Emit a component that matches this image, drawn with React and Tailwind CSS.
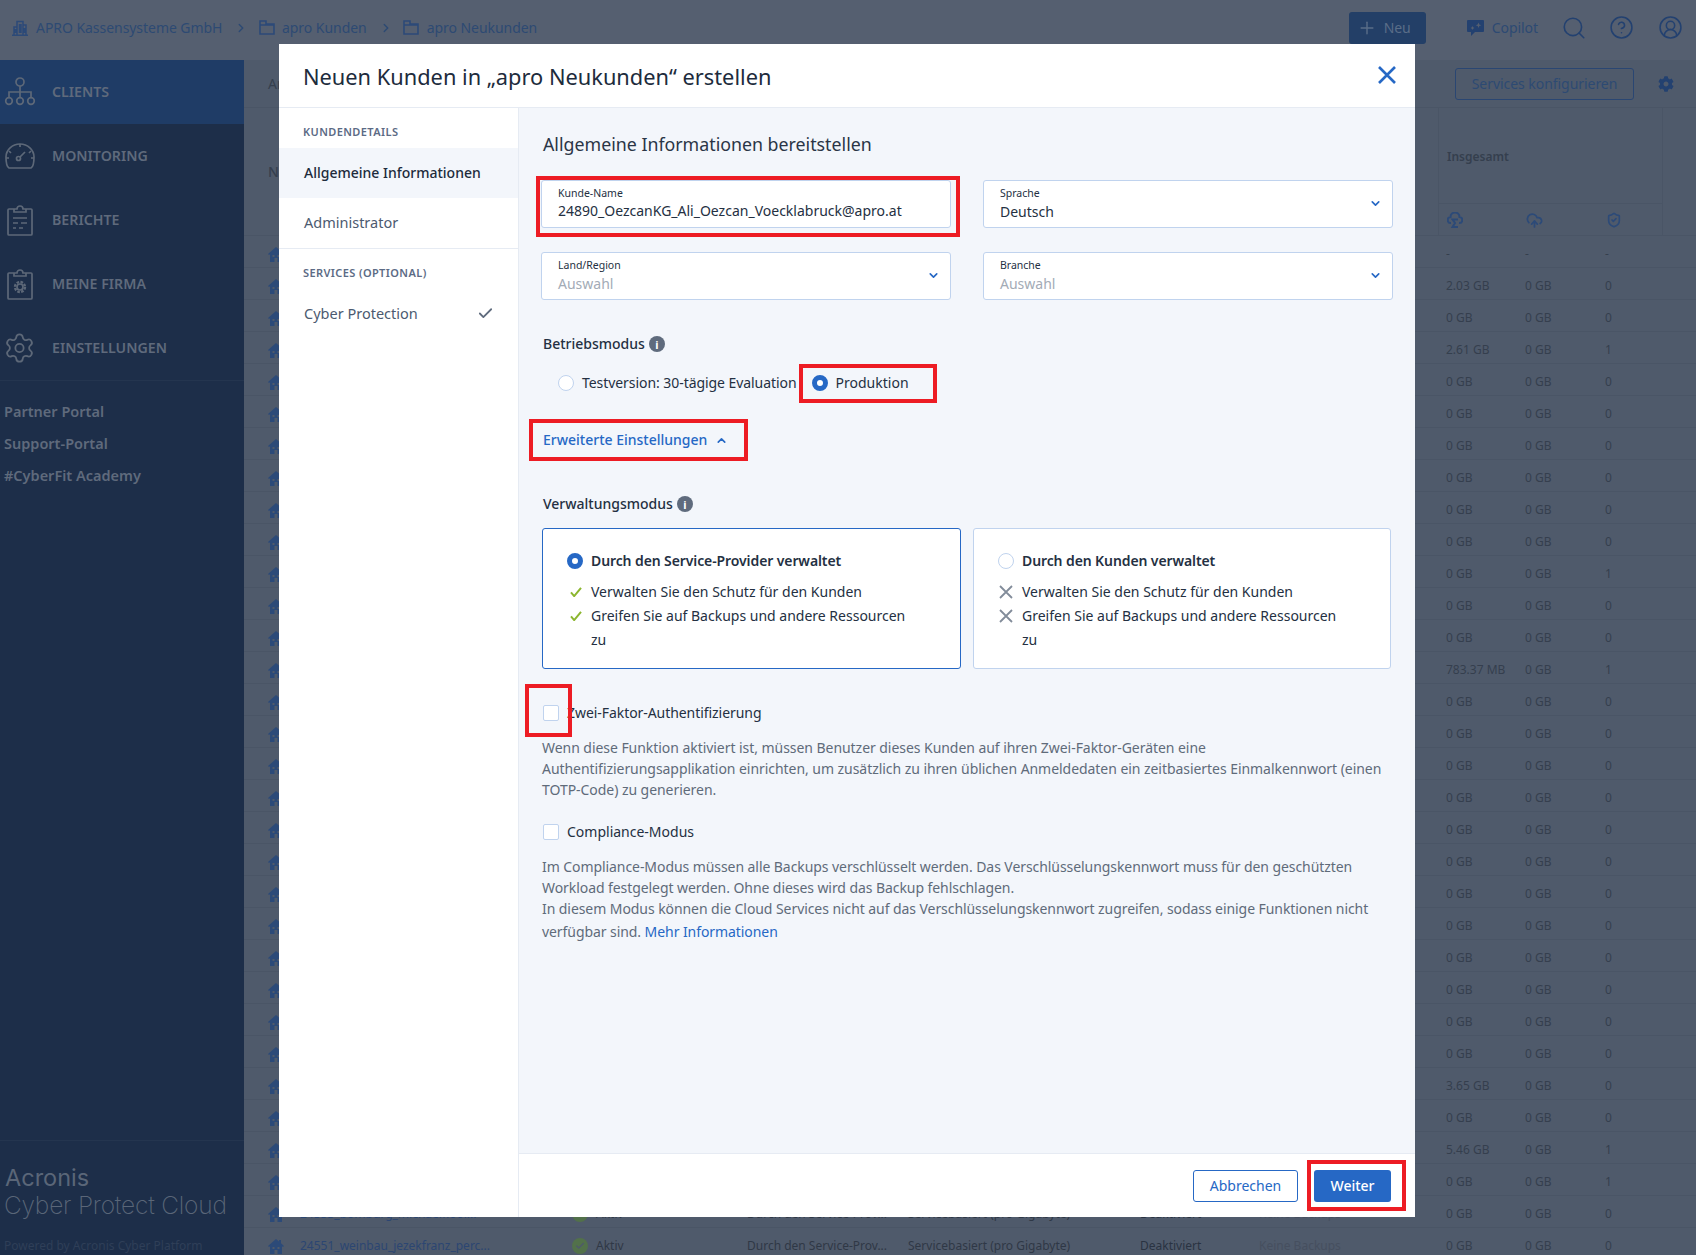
import React from 'react';
import { ChevronDown, ChevronRight, ChevronUp, Plus, Search, CircleHelp, CircleUserRound, Check, Settings, ShieldCheck, CloudUpload } from "lucide-react";
import { FaCog } from "react-icons/fa";

const usage = [
  ['-', '-', '-'], ['2.03 GB', '0 GB', '0'], ['0 GB', '0 GB', '0'], ['2.61 GB', '0 GB', '1'], ['0 GB', '0 GB', '0'],
  ['0 GB', '0 GB', '0'], ['0 GB', '0 GB', '0'], ['0 GB', '0 GB', '0'], ['0 GB', '0 GB', '0'], ['0 GB', '0 GB', '0'],
  ['0 GB', '0 GB', '1'], ['0 GB', '0 GB', '0'], ['0 GB', '0 GB', '0'], ['783.37 MB', '0 GB', '1'], ['0 GB', '0 GB', '0'],
  ['0 GB', '0 GB', '0'], ['0 GB', '0 GB', '0'], ['0 GB', '0 GB', '0'], ['0 GB', '0 GB', '0'], ['0 GB', '0 GB', '0'],
  ['0 GB', '0 GB', '0'], ['0 GB', '0 GB', '0'], ['0 GB', '0 GB', '0'], ['0 GB', '0 GB', '0'], ['0 GB', '0 GB', '0'],
  ['0 GB', '0 GB', '0'], ['3.65 GB', '0 GB', '0'], ['0 GB', '0 GB', '0'], ['5.46 GB', '0 GB', '1'], ['0 GB', '0 GB', '1'],
  ['0 GB', '0 GB', '0'], ['0 GB', '0 GB', '0'],
];

function ClientsIcon() {
  return (
    <svg width="32" height="30" viewBox="0 0 32 30" fill="none" stroke="#5d6878" strokeWidth="1.7">
      <circle cx="16" cy="5" r="4" />
      <path d="M16 9v11M5 20v-5h22v5" />
      <circle cx="5" cy="24" r="3.3" />
      <circle cx="16" cy="24" r="3.3" />
      <circle cx="27" cy="24" r="3.3" />
    </svg>
  );
}

function MonitoringIcon() {
  return (
    <svg width="32" height="30" viewBox="0 0 32 30" fill="none" stroke="#5d6878" strokeWidth="1.7">
      <path d="M5 27c-2-1-3-4-3-11a14 13 0 0 1 28 0c0 7-1 10-3 11z" strokeLinejoin="round" />
      <path d="M16 3v3M5 10l2 2M27 10l-2 2M2 17h3M30 17h-3" />
      <circle cx="14.5" cy="17.5" r="2" />
      <path d="M16 16l5-5" />
    </svg>
  );
}

function ReportIcon() {
  return (
    <svg width="32" height="32" viewBox="0 0 32 32" fill="none" stroke="#5d6878" strokeWidth="1.7">
      <path d="M10 5H5a1 1 0 0 0-1 1v24a1 1 0 0 0 1 1h22a1 1 0 0 0 1-1V6a1 1 0 0 0-1-1h-5M10 8V5h3a3 3 0 0 1 6 0h3v3z" />
      <path d="M9 14h14M9 19h5M17 19h6M9 24h3M15 24h4" />
    </svg>
  );
}

function CompanyIcon() {
  return (
    <svg width="32" height="32" viewBox="0 0 32 32" fill="none" stroke="#5d6878" strokeWidth="1.7">
      <path d="M10 5H5a1 1 0 0 0-1 1v24a1 1 0 0 0 1 1h22a1 1 0 0 0 1-1V6a1 1 0 0 0-1-1h-5M10 8V5h3a3 3 0 0 1 6 0h3v3z" />
      <circle cx="16" cy="19" r="3" />
      <circle cx="16" cy="19" r="5" strokeWidth="2.4" strokeDasharray="2.6 1.3" />
    </svg>
  );
}

function HomeIcon() {
  return (
    <svg width="16" height="15" viewBox="0 0 16 15" fill="#2c4a78" className="shrink-0">
      <path d="M8 0l3 2.6V1h2v3.3L16 7l-1 1-1-.8V15H9.500v-4h-3v4H2V7.200L1 8 0 7z" />
      <path d="M4.500 8h2v2h-2zM9.500 8h2v2h-2z" fill="#4f5a6b" />
    </svg>
  );
}

function FolderIcon() {
  return (
    <svg width="16" height="15" viewBox="0 0 16 15" fill="none" stroke="#2c4a78" strokeWidth="1.6" className="shrink-0">
      <path d="M1 14V1h6v3h8v10zM1 5h14" />
    </svg>
  );
}

function TickMark() {
  return (
    <svg width="12" height="10" viewBox="0 0 13 11" fill="none" stroke="#8cb62f" strokeWidth="2.2" className="ml-[3px]">
      <path d="M1 6l3.500 4L12 1" />
    </svg>
  );
}

function CrossMark() {
  return (
    <svg width="14" height="14" viewBox="0 0 14 14" fill="none" stroke="#828c9a" strokeWidth="1.8" className="ml-px">
      <path d="M1 1l12 12M13 1L1 13" />
    </svg>
  );
}

function RedBox({ className }) {
  return <div className={`absolute border-4 border-[#ed1c24] pointer-events-none ${className}`} />;
}

function Radio({ on }) {
  return on
    ? <span className="block w-4 h-4 shrink-0 rounded-full border-[5px] border-[#2668c5] bg-white" />
    : <span className="block w-4 h-4 shrink-0 rounded-full border border-[#c0d3ee] bg-white" />;
}

function InfoDot() {
  return <span className="flex items-center justify-center w-4 h-4 rounded-full bg-[#5f6b7d] text-white text-[11px] font-bold leading-none">i</span>;
}

function Field({ label, value, placeholder, select }) {
  return (
    <div className="relative h-12 bg-white border border-[#c0d3ee] rounded-[3px] pl-4 pt-[5px]">
      <div className="text-[10.5px] leading-[14px] text-[#243042]">{label}</div>
      <div className={`text-sm leading-5 ${select ? 'mt-[2px]' : 'mt-[1px]'} ${placeholder ? 'text-[#a3abb6]' : 'text-[#243042]'}`}>{value}</div>
      {select && <ChevronDown size={13} strokeWidth={3} className="absolute right-[10px] top-[16px] text-[#2668c5]" />}
    </div>
  );
}

function ModeCard({ active, title, icon: Icon }) {
  return (
    <div className={`h-[141px] bg-white rounded-[3px] border pl-6 pt-5 ${active ? 'w-[419px] border-[#2668c5]' : 'w-[418px] border-[#c0d3ee]'}`}>
      <div className="flex items-center gap-2 h-6 text-sm font-semibold tracking-[-0.1px] text-[#243042]">
        <Radio on={active} />
        {title}
      </div>
      <div className="mt-[7px] text-sm leading-6 text-[#243042]">
        <div className="flex">
          <span className="w-6 h-6 shrink-0 flex items-center"><Icon /></span>
          Verwalten Sie den Schutz für den Kunden
        </div>
        <div className="flex">
          <span className="w-6 h-6 shrink-0 flex items-center"><Icon /></span>
          <span className="w-[320px]">Greifen Sie auf Backups und andere Ressourcen zu</span>
        </div>
      </div>
    </div>
  );
}

function Sidebar() {
  const items = [
    { label: 'CLIENTS', icon: ClientsIcon, active: true },
    { label: 'MONITORING', icon: MonitoringIcon },
    { label: 'BERICHTE', icon: ReportIcon },
    { label: 'MEINE FIRMA', icon: CompanyIcon },
    { label: 'EINSTELLUNGEN', icon: () => <Settings size={34} strokeWidth={1.3} className="text-[#5d6878] -ml-[1px]" /> },
  ];
  return (
    <aside className="w-[244px] shrink-0 bg-[#1d2e49] flex flex-col">
      {items.map((item) => (
        <div key={item.label} className={`h-16 flex items-center pl-1 gap-4 ${item.active ? 'bg-[#1f3c66]' : ''}`}>
          <span className="w-8 flex justify-center"><item.icon /></span>
          <span className="text-[14.2px] font-semibold text-[#5f6a7c]">{item.label}</span>
        </div>
      ))}
      <div className="border-t border-[#24354f] pt-[14px] pl-1 text-[14.5px] font-semibold text-[#5f6a7c]">
        <div className="h-8 leading-8">Partner Portal</div>
        <div className="h-8 leading-8">Support-Portal</div>
        <div className="h-8 leading-8">#CyberFit Academy</div>
      </div>
      <div className="mt-auto border-t border-[#24354f] h-[115px] pl-[4px] pt-[22px] text-[#5a6678]">
        <div className="font-['Inter'] text-[23.5px] leading-[30px] font-normal pl-px">Acronis</div>
        <div className="font-['Inter'] text-[24.5px] leading-[24px] font-extralight tracking-[-0.2px] whitespace-nowrap">Cyber Protect Cloud</div>
        <div className="mt-[19px] text-xs leading-5 text-[#2f3f58]">Powered by Acronis Cyber Platform</div>
      </div>
    </aside>
  );
}

function TopBar() {
  return (
    <header className="h-[60px] shrink-0 bg-[#555f70] flex items-center pb-[5px] text-sm tracking-[-0.05px] text-[#2d4a73]">
      <svg width="16" height="16" viewBox="0 0 16 16" fill="none" stroke="#2c4a78" strokeWidth="1.5" className="ml-3 shrink-0">
        <path d="M0 15.200h16M2 15V7h3M5 15V1.500h6V15M14 15V5h-3M7.500 4v9M9 4v9M3.500 9v4M12.500 8v5" />
      </svg>
      <span className="ml-2 w-[186px] whitespace-nowrap">APRO Kassensysteme GmbH</span>
      <ChevronRight size={14} strokeWidth={2.5} className="ml-[12px]" />
      <span className="ml-[11px]"><FolderIcon /></span>
      <span className="ml-[7px]">apro Kunden</span>
      <ChevronRight size={14} strokeWidth={2.5} className="ml-[12px]" />
      <span className="ml-[10px]"><FolderIcon /></span>
      <span className="ml-2">apro Neukunden</span>
      <div className="ml-auto flex items-center">
        <div className="w-[77px] h-8 rounded-[3px] bg-[#233f67] flex items-center pl-[8px] gap-[7px] text-[#5a6d88]">
          <Plus size={20} strokeWidth={1.7} />
          Neu
        </div>
        <svg width="17" height="16" viewBox="0 0 17 16" fill="#234170" className="ml-[41px]">
          <path d="M1 0h15a1 1 0 0 1 1 1v10a1 1 0 0 1-1 1H8l-4 4v-4H1a1 1 0 0 1-1-1V1a1 1 0 0 1 1-1z" />
          <path d="M11.500 2.500l.8 2 2 .8-2 .8-.8 2-.8-2-2-.8 2-.8zM5.500 6l.6 1.300 1.400.7-1.400.7-.6 1.300-.6-1.300L3.500 8l1.400-.7z" fill="#555f70" />
        </svg>
        <span className="ml-2">Copilot</span>
        <Search size={26} strokeWidth={1.5} className="ml-[23px] text-[#234170]" />
        <CircleHelp size={25} strokeWidth={1.5} className="ml-[22px] text-[#234170]" />
        <CircleUserRound size={25} strokeWidth={1.5} className="ml-6 mr-[13px] text-[#234170]" />
      </div>
    </header>
  );
}

function CustomerTable() {
  return (
    <main className="flex-1 min-w-0 bg-[#4f5a6b] flex flex-col text-[#353f4e] text-xs">
      <div className="h-12 shrink-0 border-b border-[#4a5566] flex items-center pl-6">
        <span className="text-sm">Ar</span>
        <div className="ml-auto w-[179px] h-8 border border-[#2a4672] rounded-[3px] flex items-center justify-center text-sm tracking-[-0.05px] text-[#2d4a73]">Services konfigurieren</div>
        <FaCog size={16} className="ml-6 mr-[22px] text-[#234170]" />
      </div>
      <div className="h-[128px] shrink-0 flex border-b border-[#4a5566]">
        <div className="w-[1194px] pl-6 pt-[54px] text-sm font-medium">Name</div>
        <div className="w-[225px] border-x border-[#4a5566]">
          <div className="h-24 border-b border-[#4a5566] flex items-center pl-2 pt-[3px] text-xs font-semibold">Insgesamt</div>
          <div className="h-8 grid grid-cols-[79px_80px_1fr] items-center pl-2 text-[#2c4a78]">
            <svg width="16" height="16" viewBox="0 0 16 16" fill="none" stroke="currentColor" strokeWidth="2">
              <path d="M4 11a3 3 0 0 1-.5-6 4.500 4.500 0 0 1 9 0 3 3 0 0 1-.5 6M11 7.500H5.500L8 11l-2.500 4H11" />
            </svg>
            <CloudUpload size={17} strokeWidth={2.5} />
            <ShieldCheck size={16} strokeWidth={2.5} />
          </div>
        </div>
      </div>
      {usage.map((row, i) => (
        <div key={i} className="h-8 shrink-0 grid grid-cols-[320px_175px_159px_233px_120px_187px_79px_80px_66px] items-center pt-[5px] border-b border-[#4a5566] whitespace-nowrap">
          <div className="pl-6 flex items-center gap-[16px] text-[#2c4672]">
            <HomeIcon />
            {i === 31 ? '24551_weinbau_jezekfranz_perc...' : '24553_bomburg_michaelfloor...'}
          </div>
          <div className="pl-2 flex items-center gap-2 text-[#2f3846]">
            <span className="w-4 h-4 rounded-full bg-[#52714a] flex items-center justify-center"><Check size={10} strokeWidth={3.5} className="text-[#4f5a6b]" /></span>
            Aktiv
          </div>
          <div className="pl-2 text-[#2f3846]">Durch den Service-Prov...</div>
          <div className="pl-[10px] text-[#2f3846]">Servicebasiert (pro Gigabyte)</div>
          <div className="pl-[9px] text-[#2a3342]">Deaktiviert</div>
          <div className="pl-2 text-[#464f5f]">Keine Backups</div>
          <div className="pl-2">{row[0]}</div>
          <div className="pl-2">{row[1]}</div>
          <div className="pl-2">{row[2]}</div>
        </div>
      ))}
    </main>
  );
}

function CreateCustomerModal() {
  return (
    <div className="absolute left-[279px] top-[44px] w-[1136px] h-[1173px] bg-white flex flex-col text-[#243042]">
      <div className="h-16 shrink-0 border-b border-[#e6ebf3] flex items-center justify-between pl-6 pr-[19px]">
        <h1 className="pt-[3px] text-[21.8px] text-[#202b3c]">Neuen Kunden in „apro Neukunden“ erstellen</h1>
        <svg width="18" height="18" viewBox="0 0 18 18" fill="none" stroke="#2668c5" strokeWidth="2.6" className="mb-[2px]">
          <path d="M1 1l16 16M17 1L1 17" />
        </svg>
      </div>

      <div className="flex-1 flex min-h-0">
        <nav className="w-[240px] shrink-0 border-r border-[#e6ebf3] text-sm">
          <div className="h-10 pl-6 pt-[15px] text-[11px] leading-[18px] font-semibold tracking-[0.4px] text-[#5c6b85]">KUNDENDETAILS</div>
          <div className="h-[50px] bg-[#f3f6fb] pl-[25px] flex items-center font-medium text-[#202b3c]">Allgemeine Informationen</div>
          <div className="h-[50px] pl-[25px] pb-[1px] flex items-center text-[14.5px] text-[#4c5a70]">Administrator</div>
          <div className="border-t border-[#e6ebf3] h-[41px] pl-6 pt-[15px] text-[11px] leading-[18px] font-semibold tracking-[0.4px] text-[#5c6b85]">SERVICES (OPTIONAL)</div>
          <div className="h-[40px] pl-[25px] pr-[24px] mt-[4px] flex items-center justify-between text-[14.5px] text-[#4c5a70]">
            Cyber Protection
            <Check size={17} strokeWidth={2.5} className="text-[#5f6b7d]" />
          </div>
        </nav>

        <div className="flex-1 flex flex-col min-w-0">
          <div className="flex-1 bg-[#f3f6fb] pl-[22px] pt-[23px]">
            <h2 className="text-[17.8px] leading-[26px] pl-[2px] text-[#2a3546]">Allgemeine Informationen bereitstellen</h2>
            <div className="mt-[23px] grid grid-cols-[410px_410px] gap-x-8 gap-y-6">
              <Field label="Kunde-Name" value="24890_OezcanKG_Ali_Oezcan_Voecklabruck@apro.at" />
              <Field label="Sprache" value="Deutsch" select />
              <Field label="Land/Region" value="Auswahl" placeholder select />
              <Field label="Branche" value="Auswahl" placeholder select />
            </div>

            <div className="mt-[34px] pl-[2px] flex items-center gap-1 h-5 text-sm font-medium">Betriebsmodus <InfoDot /></div>
            <div className="mt-[17px] pl-[17px] flex items-center h-6 text-sm">
              <Radio />
              <span className="ml-2 tracking-[-0.06px]">Testversion: 30-tägige Evaluation</span>
              <span className="ml-[15px]"><Radio on /></span>
              <span className="ml-2">Produktion</span>
            </div>

            <div className="mt-[35px] pl-[2px] flex items-center gap-2 h-5 text-sm font-medium text-[#2668c5]">
              Erweiterte Einstellungen
              <ChevronUp size={13} strokeWidth={3} />
            </div>

            <div className="mt-[44px] pl-[2px] flex items-center gap-1 h-5 text-sm font-medium">Verwaltungsmodus <InfoDot /></div>
            <div className="mt-[14px] ml-px flex gap-3">
              <ModeCard active title="Durch den Service-Provider verwaltet" icon={TickMark} />
              <ModeCard title="Durch den Kunden verwaltet" icon={CrossMark} />
            </div>

            <div className="mt-[34px] pl-[2px] flex items-center gap-2 h-5 text-sm tracking-[-0.06px]">
              <span className="w-4 h-4 rounded-[2px] border border-[#c0d3ee] bg-white" />
              Zwei-Faktor-Authentifizierung
            </div>
            <p className="mt-[14px] ml-px w-[852px] text-sm leading-[21px] tracking-[-0.05px] text-[#5f6b7a]">
              Wenn diese Funktion aktiviert ist, müssen Benutzer dieses Kunden auf ihren Zwei-Faktor-Geräten eine Authentifizierungsapplikation einrichten, um zusätzlich zu ihren üblichen Anmeldedaten ein zeitbasiertes Einmalkennwort (einen TOTP-Code) zu generieren.
            </p>
            <div className="mt-[22px] pl-[2px] flex items-center gap-2 h-5 text-sm">
              <span className="w-4 h-4 rounded-[2px] border border-[#c0d3ee] bg-white" />
              Compliance-Modus
            </div>
            <div className="mt-[14px] ml-px w-[852px] text-sm leading-[21px] tracking-[-0.07px] text-[#5f6b7a]">
              <p>Im Compliance-Modus müssen alle Backups verschlüsselt werden. Das Verschlüsselungskennwort muss für den geschützten Workload festgelegt werden. Ohne dieses wird das Backup fehlschlagen.</p>
              <p>In diesem Modus können die Cloud Services nicht auf das Verschlüsselungskennwort zugreifen, sodass einige Funktionen nicht verfügbar sind. <a className="inline-block pt-[2px] text-[#2668c5]">Mehr Informationen</a></p>
            </div>
          </div>

          <div className="h-16 shrink-0 bg-white border-t border-[#e6ebf3] flex items-center justify-end gap-4 pr-6 text-sm">
            <button className="w-[105px] h-8 rounded-[3px] border border-[#2668c5] text-[#2668c5]">Abbrechen</button>
            <button className="w-[77px] h-8 rounded-[3px] bg-[#2668c5] text-white font-medium">Weiter</button>
          </div>
        </div>
      </div>

      {/* red annotation boxes from the original screenshot */}
      <RedBox className="left-[257px] top-[132px] w-[424px] h-[61px]" />
      <RedBox className="left-[520px] top-[320px] w-[138px] h-[39px]" />
      <RedBox className="left-[250px] top-[375px] w-[219px] h-[42px]" />
      <RedBox className="left-[246px] top-[640px] w-[47px] h-[53px]" />
      <RedBox className="left-[1028px] top-[1116px] w-[99px] h-[51px]" />
    </div>
  );
}

export default function App() {
  return (
    <div className="relative w-[1696px] h-[1255px] overflow-hidden flex flex-col font-['Noto_Sans',sans-serif]">
      <TopBar />
      <div className="flex-1 flex min-h-0">
        <Sidebar />
        <CustomerTable />
      </div>
      <CreateCustomerModal />
    </div>
  );
}
